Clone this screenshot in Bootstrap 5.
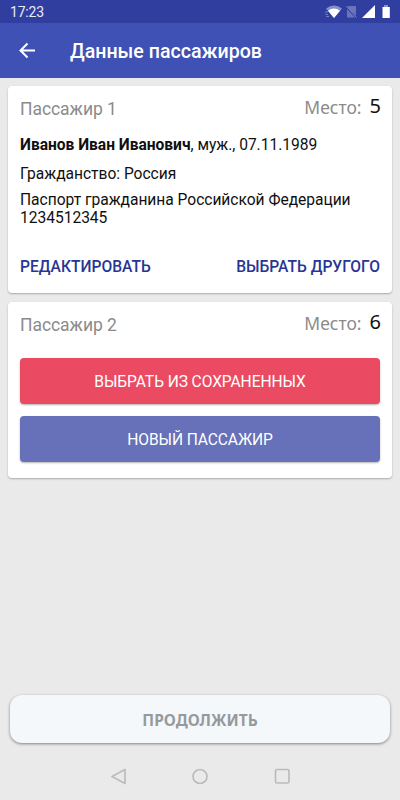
<!DOCTYPE html>
<html lang="ru">
<head>
<meta charset="utf-8">
<meta name="viewport" content="width=device-width, initial-scale=1">
<title>Данные пассажиров</title>
<link rel="stylesheet" href="https://cdn.jsdelivr.net/npm/bootstrap@5.3.0/dist/css/bootstrap.min.css">
<style>
body{font-family:Roboto,"Noto Sans",sans-serif;background:#eaeaea;color:#101010;height:800px;overflow:hidden;font-size:16px;line-height:18px}
.status-bar{height:23px;background:#303f9f;font-size:14px;letter-spacing:-.2px;color:#e9ebf8;padding:1px 8px 0 10px}
.app-bar{height:55px;background:#3f51b5;padding:1px 18px 0}
.app-title{font-size:19.6px;font-weight:500;line-height:24px;margin:1px 0 0 31px}
.passenger{border:0;border-radius:4px;box-shadow:0 1px 2px rgba(0,0,0,.28);padding:0 12px}
.passenger-1{height:207px}
.passenger-2{height:176px;margin-top:9px}
.who{font-size:17.5px;letter-spacing:-.05px;color:#8b8b8b;line-height:20px;padding-top:13px}
.seat{font-family:"Noto Sans",sans-serif;font-size:17.5px;color:#8b8b8b;line-height:24px;padding-top:9px}
.seat-no{font-size:20px;color:#111;margin:-1px -1px 0 8px}
.details{font-size:15.6px;letter-spacing:-.03px;padding-top:17px}
.citizenship{margin:11px 0 8px}
.text-action{font-size:15.6px;font-weight:500;color:#283593;line-height:19px;text-decoration:none}
.btn-wide{height:46px;border:0;border-radius:4px;font-size:15.6px;letter-spacing:-.09px;color:#fff;padding-top:9px;box-shadow:0 1px 2px rgba(0,0,0,.3)}
.btn-saved{background:#eb4b62}
.btn-new{background:#6671ba}
.btn-next{height:48px;border:0;border-radius:12px;background:#f4f8fb;color:#979a9c;font-family:"Noto Sans",sans-serif;font-weight:700;font-size:15.5px;padding-top:9px;box-shadow:0 1px 3px rgba(0,0,0,.45)}
.sys-nav{height:57px;padding-top:9px}
</style>
<script src="https://cdn.jsdelivr.net/npm/bootstrap@5.3.0/dist/js/bootstrap.bundle.min.js"></script>
</head>
<body class="d-flex flex-column">
<div class="status-bar d-flex justify-content-between align-items-center">
  <span>17:23</span>
  <svg width="68" height="16" viewBox="324 4 68 16">
    <path d="M326 8.600Q334 2.500 342 8.600L334 18Z" fill="#8790ca"/>
    <path d="M328 10.700Q334 6.500 340 10.700L334 18Z" fill="#fff"/>
    <path d="M325 12h3M325.500 14.500h2.500M326 16.500h3" stroke="#7780c2"/>
    <path d="M349 6h7v9.500L347.500 7.500ZM347 9l8 8.500h-8Z" fill="#6974bc"/>
    <path d="M346.500 6l10 11.500" stroke="#7f88c6"/>
    <path d="M375 5v13h-13Z" fill="#fff"/>
    <path d="M384 5h4v2h-4z" fill="#8790ca"/>
    <path d="M382.500 7h7.300v11h-7.300z" fill="#fff"/>
  </svg>
</div>
<header class="app-bar d-flex align-items-center text-white">
  <svg width="21" height="20" viewBox="0 0 21 20" fill="none" stroke="#fff" stroke-width="2"><path d="M17 9.500H3M9.500 2.500l-7 7 7 7"/></svg>
  <h1 class="app-title">Данные пассажиров</h1>
</header>
<main class="d-flex flex-column flex-grow-1 px-2 pt-2">
  <section class="card passenger passenger-1">
    <div class="d-flex justify-content-between">
      <div class="who">Пассажир 1</div>
      <div class="seat d-flex">Место:<span class="seat-no">5</span></div>
    </div>
    <div class="details">
      <p class="mb-0"><b>Иванов Иван Иванович</b>, муж., 07.11.1989</p>
      <p class="citizenship">Гражданство: Россия</p>
      <p class="mb-0">Паспорт гражданина Российской Федерации<br>1234512345</p>
    </div>
    <div class="d-flex justify-content-between mt-auto pb-3">
      <a class="text-action" href="#">РЕДАКТИРОВАТЬ</a>
      <a class="text-action" href="#">ВЫБРАТЬ ДРУГОГО</a>
    </div>
  </section>
  <section class="card passenger passenger-2">
    <div class="d-flex justify-content-between">
      <div class="who">Пассажир 2</div>
      <div class="seat d-flex">Место:<span class="seat-no">6</span></div>
    </div>
    <div class="d-grid mt-auto pb-3" style="gap:12px">
      <button class="btn btn-wide btn-saved">ВЫБРАТЬ ИЗ СОХРАНЕННЫХ</button>
      <button class="btn btn-wide btn-new">НОВЫЙ ПАССАЖИР</button>
    </div>
  </section>
</main>
<footer>
  <div class="d-grid" style="padding:0 10px"><button class="btn btn-next">ПРОДОЛЖИТЬ</button></div>
  <nav class="sys-nav d-flex justify-content-center align-items-center">
    <svg width="184" height="18" viewBox="108 767 184 18" fill="none" stroke="#bcbcbc" stroke-width="1.700" stroke-linejoin="round"><path d="M125 769.500v14l-13-7z"/><circle cx="200" cy="776.500" r="7"/><rect x="275.500" y="769.500" width="13.500" height="13.500" rx="1.500"/></svg>
  </nav>
</footer>
</body>
</html>
